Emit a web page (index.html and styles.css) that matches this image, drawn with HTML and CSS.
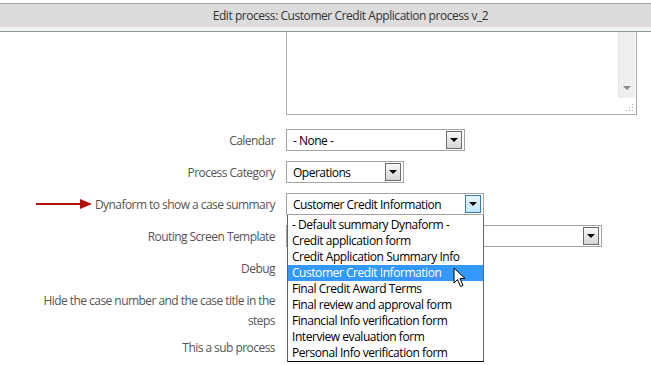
FILE: index.html
```html
<!DOCTYPE html>
<html lang="en">
<head>
    <meta charset="UTF-8">
    <title>Edit process</title>
    <link rel="stylesheet" href="styles.css">
</head>
<body>
    <div class="header">
        <span class="title">Edit process: Customer Credit Application process v_2</span>
    </div>

    <div class="form">
        <div class="row notes-row">
            <div class="label"></div>
            <div class="field">
                <div class="notes">
                    <div class="scrollbar">
                        <span class="scroll-down"></span>
                    </div>
                    <span class="grip"></span>
                </div>
            </div>
        </div>

        <div class="row">
            <div class="label">Calendar</div>
            <div class="field">
                <div class="select calendar">
                    <span class="value">- None -</span>
                    <span class="btn"></span>
                </div>
            </div>
        </div>

        <div class="row">
            <div class="label">Process Category</div>
            <div class="field">
                <div class="select category">
                    <span class="value">Operations</span>
                    <span class="btn"></span>
                </div>
            </div>
        </div>

        <div class="row">
            <div class="label">
                <svg class="pointer" width="56" height="10" viewBox="0 0 56 10">
                    <line x1="0" y1="5" x2="46" y2="5" stroke="#b40f0f" stroke-width="2"/>
                    <polygon points="44,0 56,5 44,10" fill="#b40f0f"/>
                </svg>
                Dynaform to show a case summary
            </div>
            <div class="field">
                <div class="select dynaform">
                    <span class="value">Customer Credit Information</span>
                    <span class="btn focus"></span>
                    <!-- open dropdown list -->
                    <ul class="options">
                        <li>- Default summary Dynaform -</li>
                        <li>Credit application form</li>
                        <li>Credit Application Summary Info</li>
                        <li class="active">Customer Credit Information</li>
                        <li>Final Credit Award Terms</li>
                        <li>Final review and approval form</li>
                        <li>Financial Info verification form</li>
                        <li>Interview evaluation form</li>
                        <li>Personal Info verification form</li>
                    </ul>
                    <svg class="cursor" width="14" height="21" viewBox="0 0 14 21">
                        <path d="M1 1 L1 16 L4.5 12.5 L7.5 19.5 L10 18.5 L7 11.5 L12 11.5 Z" fill="#fff" stroke="#000" stroke-width="1" stroke-linejoin="round"/>
                    </svg>
                </div>
            </div>
        </div>

        <div class="row">
            <div class="label">Routing Screen Template</div>
            <div class="field">
                <div class="select routing">
                    <span class="value"></span>
                    <span class="btn"></span>
                </div>
            </div>
        </div>

        <div class="row">
            <div class="label">Debug</div>
            <div class="field"></div>
        </div>

        <div class="row tall">
            <div class="label">Hide the case number and the case title in the steps</div>
            <div class="field"></div>
        </div>

        <div class="row">
            <div class="label">This a sub process</div>
            <div class="field"></div>
        </div>
    </div>
</body>
</html>
```

FILE: styles.css
```css
body {
    margin: 0;
    font-family: "Open Sans", "Noto Sans", sans-serif;
    font-size: 12px;
    letter-spacing: -0.55px;
    color: #555;
    background-color: #fff;
    overflow: hidden;
}

.header {
    position: relative;
    z-index: 2;
    height: 27px;
    margin-top: 3px;
    border-top: 1px solid #a8a8a8;
    border-bottom: 1px solid #8c9a98;
    background: linear-gradient(#dcdcdc 0, #dcdcdc 23px, #f1f1f1 23px);
    text-align: center;
    padding-left: 50px;
    box-sizing: content-box;
}

.header .title {
    display: inline-block;
    line-height: 24px;
    color: #333;
    font-size: 12px;
    letter-spacing: -0.45px;
}

.form {
    display: flex;
    flex-direction: column;
}

.row {
    display: grid;
    grid-template-columns: 275px 1fr;
    column-gap: 11px;
    align-items: center;
    height: 32px;
}

.label {
    display: flex;
    justify-content: flex-end;
    align-items: center;
    gap: 3px;
    text-align: right;
}

.notes-row {
    height: 92px;
    align-items: start;
}

.notes {
    position: relative;
    width: 349px;
    height: 86px;
    margin-top: -4px;
    border: 1px solid #aaa;
    border-top: none;
    background: #fff;
}

.scrollbar {
    position: absolute;
    right: 1px;
    top: 0;
    width: 16px;
    height: 70px;
    background: #efefef;
    border-left: 1px solid #e4e4e4;
}

.scroll-down {
    position: absolute;
    left: 4px;
    bottom: 8px;
    border-left: 4px solid transparent;
    border-right: 4px solid transparent;
    border-top: 4px solid #888;
}

.grip {
    position: absolute;
    right: 3px;
    bottom: 3px;
    width: 8px;
    height: 8px;
    background: radial-gradient(circle, #aaa 0.8px, transparent 1px) 0 0 / 3px 3px;
    clip-path: polygon(100% 0, 100% 100%, 0 100%);
}

.select {
    position: relative;
    display: flex;
    align-items: center;
    justify-content: space-between;
    height: 20px;
    border: 1px solid #a3a3a3;
    box-sizing: content-box;
    color: #000;
    background: #fff;
}

.select .value {
    padding-left: 6px;
    font-size: 12px;
    letter-spacing: -0.5px;
}

.calendar { width: 177px; }
.category { width: 116px; }
.dynaform { width: 196px; }
.routing { width: 314px; }

.btn {
    position: relative;
    width: 14px;
    height: 16px;
    margin-right: 2px;
    border: 1px solid #6a6a6a;
    background: linear-gradient(#fafafa, #d4d4d4);
}

.btn::after {
    content: "";
    position: absolute;
    left: 3px;
    top: 6px;
    border-left: 4px solid transparent;
    border-right: 4px solid transparent;
    border-top: 4px solid #000;
}

.btn.focus {
    border-color: #3d7bad;
    background: linear-gradient(#eaf6fd, #bee6fd);
}

.options {
    position: absolute;
    z-index: 3;
    left: 0;
    top: 21px;
    width: 195px;
    margin: 0;
    padding: 2px 0 0;
    list-style: none;
    background: #fff;
    border: 1px solid #646464;
    border-top: none;
    border-bottom-color: #000;
}

.options li {
    height: 16px;
    line-height: 16px;
    padding-left: 4px;
    font-size: 12px;
    letter-spacing: -0.45px;
    color: #000;
    white-space: nowrap;
}

.options li.active {
    background: #3399ff;
    color: #fff;
}

.cursor {
    position: absolute;
    z-index: 4;
    left: 166px;
    top: 73px;
}

.row.tall {
    height: 47px;
    align-items: start;
}

.row.tall .label {
    padding-top: 7px;
    padding-left: 36px;
    line-height: 20px;
}
```
